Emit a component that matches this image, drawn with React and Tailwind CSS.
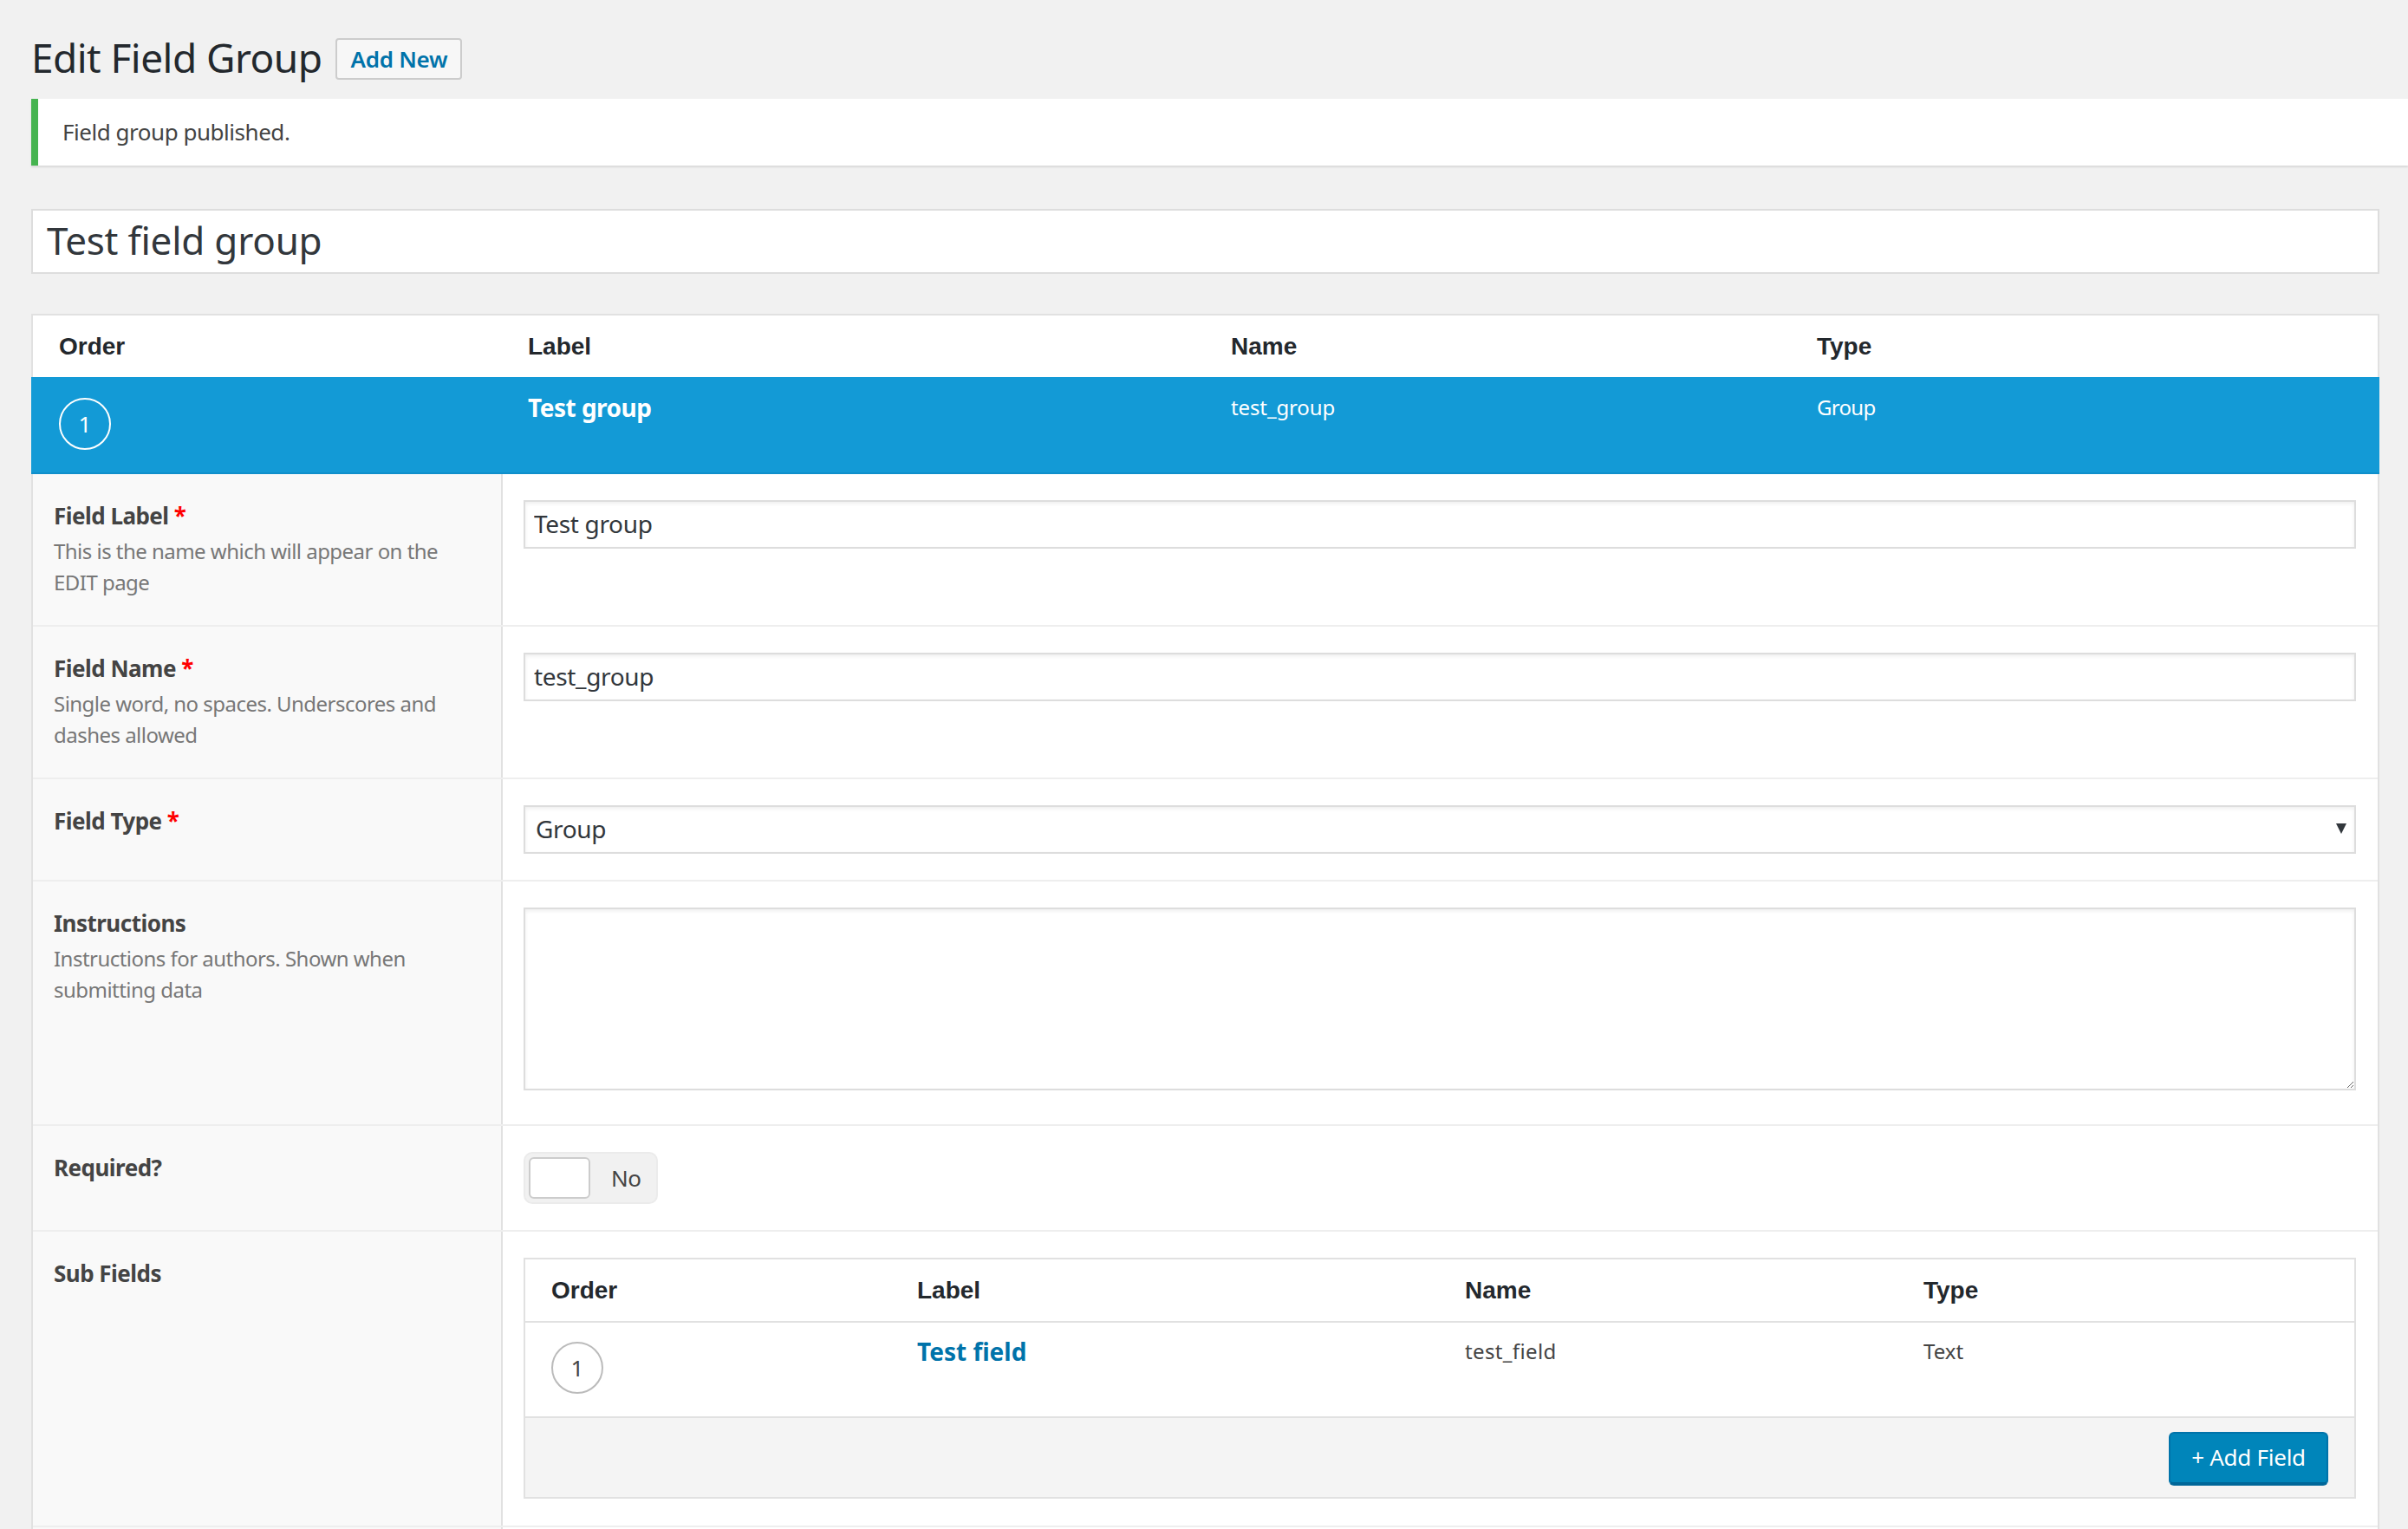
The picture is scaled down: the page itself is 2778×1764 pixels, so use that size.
const FieldRow = ({ heightClass, first, label, required, desc, children }) => (
  <div className={`flex ${first ? "" : "border-t-2 border-[#eeeeee]"} ${heightClass}`}>
    <div className="w-[542px] shrink-0 border-r-2 border-[#e1e1e1] bg-[#f9f9f9] px-[24px] pt-[33px]">
      <div className="text-[26px] leading-[30px] font-bold tracking-[-0.02em] text-[#444444]">
        {label}
        {required && <span className="text-[#ff0000]"> *</span>}
      </div>
      {desc && <p className="mt-[8px] text-[24px] leading-[36px] tracking-[-0.022em] text-[#777777]">{desc}</p>}
    </div>
    <div className="min-w-0 flex-1 pl-[24px] pr-[25px] pt-[30px]">{children}</div>
  </div>
);

const inputClass =
  "block h-[56px] w-full border-2 border-[#dddddd] bg-white px-[10px] pb-[3px] text-[28px] tracking-[-0.012em] text-[#32373c] shadow-[inset_0_2px_4px_rgba(0,0,0,0.07)] outline-none";

const Circle = ({ white }) => (
  <div
    className={`flex h-[60px] w-[60px] items-center justify-center rounded-full border-2 text-[26px] ${
      white ? "border-white text-white" : "border-[#bbbbbb] text-[#444444]"
    }`}
  >
    1
  </div>
);

const HEAD = "font-['Liberation_Sans',sans-serif] text-[28px] font-bold text-[#23282d]";

export default function App() {
  return (
    <div className="h-[1764px] overflow-hidden bg-[#f1f1f1] font-['Noto_Sans',sans-serif] text-[#444444]">
      <div className="flex h-[114px] items-start pl-[36px] pt-[44px]">
        <h1 className="-mt-[2px] text-[46px] leading-[48px] tracking-[-0.012em] text-[#23282d]">Edit Field Group</h1>
        <a className="ml-[16px] flex h-[48px] w-[146px] items-center justify-center rounded-[4px] border-2 border-[#cccccc] bg-[#f7f7f7] text-[26px] font-semibold tracking-[-0.01em] text-[#0073aa]">
          Add New
        </a>
      </div>

      <div className="ml-[36px] flex h-[77px] items-center border-l-[8px] border-[#46b450] bg-white pl-[28px] text-[26px] tracking-[-0.018em] text-[#444444] shadow-[0_2px_2px_rgba(0,0,0,0.1)]">
        Field group published.
      </div>

      <div className="ml-[36px] mr-[33px] mt-[50px]">
        <input
          readOnly
          value="Test field group"
          className="block h-[75px] w-full border-2 border-[#dddddd] bg-white pb-[3px] pl-[16px] pr-[16px] text-[44px] tracking-[-0.005em] text-[#32373c] outline-none"
        />

        <div className="mt-[46px] border-2 border-b-0 border-[#e1e1e1] bg-white">
          <div className={`grid h-[71px] grid-cols-[541px_811px_676px_1fr] items-center pl-[30px] pt-[1px] ${HEAD}`}>
            <span>Order</span>
            <span>Label</span>
            <span>Name</span>
            <span>Type</span>
          </div>

          <div className="-mx-[2px] grid h-[112px] grid-cols-[541px_811px_676px_1fr] border-b-2 border-[#0f8fcb] bg-[#139ad6] pl-[32px] pt-[24px] text-white">
            <Circle white />
            <span className="-mt-[5px] text-[28px] leading-[32px] font-bold tracking-[-0.018em]">Test group</span>
            <span className="-mt-[5px] text-[24px] leading-[32px] tracking-[-0.005em]">test_group</span>
            <span className="-mt-[5px] text-[24px] leading-[32px] tracking-[-0.03em]">Group</span>
          </div>

          <FieldRow first heightClass="h-[174px]" label="Field Label" required desc="This is the name which will appear on the EDIT page">
            <input readOnly value="Test group" className={inputClass} />
          </FieldRow>

          <FieldRow heightClass="h-[176px]" label="Field Name" required desc="Single word, no spaces. Underscores and dashes allowed">
            <input readOnly value="test_group" className={inputClass} />
          </FieldRow>

          <FieldRow heightClass="h-[118px]" label="Field Type" required>
            <div className="relative">
              <select className={`${inputClass} appearance-none pl-[12px]`} defaultValue="Group">
                <option>Group</option>
              </select>
              <svg className="pointer-events-none absolute right-[11px] top-[21px] h-[12px] w-[12px]" viewBox="0 0 12 12">
                <polygon points="0,0 12,0 6,12" fill="#32373c" />
              </svg>
            </div>
          </FieldRow>

          <FieldRow heightClass="h-[282px]" label="Instructions" desc="Instructions for authors. Shown when submitting data">
            <textarea className="block h-[211px] w-full resize-y border-2 border-[#dddddd] bg-white shadow-[inset_0_2px_4px_rgba(0,0,0,0.07)] outline-none" />
          </FieldRow>

          <FieldRow heightClass="h-[122px]" label="Required?">
            <div className="flex h-[60px] w-[155px] items-center rounded-[10px] border-2 border-[#ebebeb] bg-[#f1f1f1] pl-[4px]">
              <div className="h-[48px] w-[71px] rounded-[6px] border-2 border-[#cccccc] bg-white" />
              <span className="ml-[24px] text-[26px] tracking-[-0.02em] text-[#444444]">No</span>
            </div>
          </FieldRow>

          <FieldRow heightClass="h-[341px]" label="Sub Fields">
            <div className="border-2 border-[#e1e1e1]">
              <div className={`grid h-[73px] grid-cols-[422px_632px_529px_1fr] items-center border-b-2 border-[#e1e1e1] pl-[30px] pt-[1px] ${HEAD}`}>
                <span>Order</span>
                <span>Label</span>
                <span>Name</span>
                <span>Type</span>
              </div>
              <div className="grid h-[110px] grid-cols-[422px_632px_529px_1fr] border-b-2 border-[#e1e1e1] pl-[30px] pt-[22px]">
                <Circle />
                <span className="-mt-[5px] text-[28px] leading-[32px] font-bold text-[#0073aa]">Test field</span>
                <span className="-mt-[5px] text-[24px] leading-[32px] tracking-[0.015em]">test_field</span>
                <span className="-mt-[5px] text-[24px] leading-[32px]">Text</span>
              </div>
              <div className="flex h-[91px] items-start justify-end bg-[#f4f4f4] pr-[30px] pt-[16px]">
                <button className="h-[62px] w-[184px] rounded-[6px] border-2 border-b-[4px] border-[#0073aa] border-b-[#006799] bg-[#0085ba] pb-[1px] text-[26px] tracking-[-0.01em] text-white">
                  + Add Field
                </button>
              </div>
            </div>
          </FieldRow>

          <FieldRow heightClass="h-[60px]" label="" />
        </div>
      </div>
    </div>
  );
}
